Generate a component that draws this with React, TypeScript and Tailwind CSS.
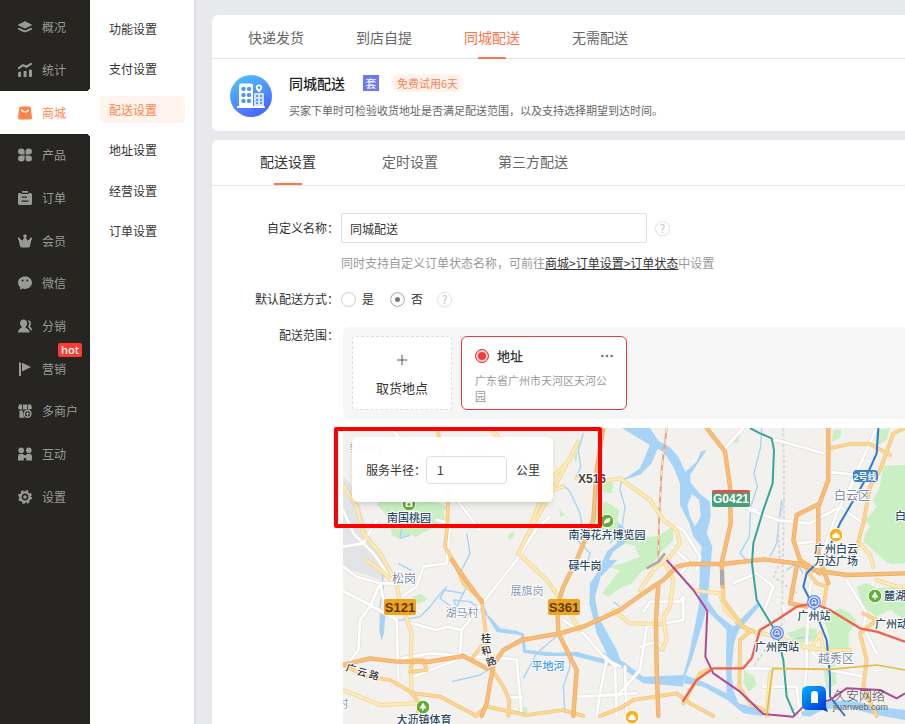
import { useState, type ReactNode } from 'react';
import { MoreHorizontal, Plus } from 'lucide-react';

const NAV_ITEMS = [
  { label: '概况', icon: 'layers' },
  { label: '统计', icon: 'stats' },
  { label: '商城', icon: 'shop' },
  { label: '产品', icon: 'product' },
  { label: '订单', icon: 'order' },
  { label: '会员', icon: 'crown' },
  { label: '微信', icon: 'wechat' },
  { label: '分销', icon: 'users' },
  { label: '营销', icon: 'flag', hot: true },
  { label: '多商户', icon: 'store' },
  { label: '互动', icon: 'people' },
  { label: '设置', icon: 'gear' },
];

const SUB_ITEMS = ['功能设置', '支付设置', '配送设置', '地址设置', '经营设置', '订单设置'];

const ICONS: Record<string, ReactNode> = {
  layers: (
    <>
      <path d="M7 1.2 13.6 4.4Q14.4 4.9 13.6 5.4L8.2 8Q7 8.6 5.8 8L.4 5.4Q-.4 4.9.4 4.4Z" />
      <path d="M1 8.8 5.8 11.1Q7 11.6 8.2 11.1L13 8.8" fill="none" stroke="currentColor" strokeWidth="2" strokeLinecap="round" />
    </>
  ),
  stats: (
    <>
      <path d="M0 9.6 3 8.4V14H1Q0 14 0 13ZM5.6 8H8.6V14H5.6ZM11 8Q11 6.6 12.5 6.6T14 8V13Q14 14 13 14H11Z" />
      <path d="M.8 5.2 5 2.2 8.4 3.8 13 .9" fill="none" stroke="currentColor" strokeWidth="2.2" strokeLinecap="round" strokeLinejoin="round" />
    </>
  ),
  shop: (
    <>
      <path d="M3 .6H11Q12.6.6 12.9 2.2L14 11.5Q14 13.6 12 13.6H2Q0 13.6 0 11.5L1.1 2.2Q1.4.6 3 .6Z" />
      <path d="M3.6 4.2Q7 7.6 10.4 4.2" fill="none" stroke="#fff" strokeWidth="1.4" strokeLinecap="round" />
    </>
  ),
  product: (
    <>
      <path d="M3.3.6Q6.6.6 6.6 3.6V6.6H3.3Q0 6.6 0 3.6T3.3.6Z" />
      <path d="M10.7.6Q14 .6 14 3.6T10.7 6.6H7.6V3.6Q7.6.6 10.7.6Z" />
      <path d="M3.3 7.6H6.6V10.6Q6.6 13.6 3.3 13.6T0 10.6 3.3 7.6Z" />
      <path d="M7.6 7.6H10.7Q14 7.6 14 10.6T10.7 13.6 7.6 10.6Z" />
    </>
  ),
  order: (
    <>
      <path d="M4 0H10V2H12.4Q14 2 14 3.6V12.4Q14 14 12.4 14H1.6Q0 14 0 12.4V3.6Q0 2 1.6 2H4Z" />
      <path d="M3.4 2.4H10.6M3.6 6.2H9M3.6 10.2H10.4" stroke="#262522" strokeWidth="1.3" />
    </>
  ),
  crown: (
    <path d="M7 .4A1.6 1.6 0 0 1 7.9 3.4L9.4 6.4 12 5A1.2 1.2 0 1 1 13.4 5.8L12 12Q11.8 13.4 10.4 13.4H3.6Q2.2 13.4 2 12L.6 5.8A1.2 1.2 0 1 1 2 5L4.6 6.4 6.1 3.4A1.6 1.6 0 0 1 7 .4Z" />
  ),
  wechat: (
    <>
      <path d="M7 .4C11 .4 14 3 14 6.6S11 12.9 7 12.9Q5.6 12.9 4.4 12.5L2 13.8 2.2 11.6Q0 9.8 0 6.6C0 3 3 .4 7 .4Z" />
      <circle cx="4.6" cy="4.6" r="1" fill="#262522" />
      <circle cx="9.4" cy="4.6" r="1" fill="#262522" />
    </>
  ),
  users: (
    <>
      <path d="M5.6.4C8 .4 9.2 2.2 9.2 4.2S7.8 7.4 7.6 8.2 11.6 10 11.6 13.4H0C0 9.6 3.8 9.2 3.8 8.2S2 6.2 2 4.2 3.2.4 5.6.4Z" />
      <path d="M10.2 1.8C11.8 2.4 12.2 3.2 12.2 4.4S11 7 11 7.6 13 8.6 13.4 11.4" fill="none" stroke="currentColor" strokeWidth="1.7" />
    </>
  ),
  flag: <path d="M1 .6H3V14H1ZM4 .8 13.2 5 4 9.4Z" />,
  store: (
    <>
      <path d="M1 .4H4.2V5.4H2Q.4 5.4 0 4ZM5 .4H9V5.4H5ZM9.8 .4H13L14 4Q13.6 5.4 12 5.4H9.8ZM1.4 6.4H4.8V9.8H5.6V12.2L6.8 13.8H1.4Z" />
      <circle cx="9.6" cy="9.8" r="3.4" fill="none" stroke="currentColor" strokeWidth="1.5" />
      <path d="M9.6 7.9V11.7M7.7 9.8H11.5" stroke="currentColor" strokeWidth="1.2" />
    </>
  ),
  people: (
    <>
      <circle cx="3.2" cy="3.2" r="2.8" />
      <circle cx="10.8" cy="3.2" r="2.8" />
      <path d="M2 6.8H4.4L6.4 8.2H7.6L9.6 6.8H12Q14 7.4 14 9.4V13.4H8.2V11H5.8V13.4H0V9.4Q0 7.4 2 6.8Z" />
    </>
  ),
  gear: (
    <>
      <circle cx="7" cy="7" r="4.6" fill="none" stroke="currentColor" strokeWidth="2.4" />
      <circle cx="7" cy="7" r="1.8" />
      <circle cx="7" cy="7" r="6.1" fill="none" stroke="currentColor" strokeWidth="1.8" strokeDasharray="2.6 2.19" />
    </>
  ),
};

function NavIcon({ name }: { name: string }) {
  return (
    <svg viewBox="0 0 14 14" className="size-3.5 shrink-0" fill="currentColor" aria-hidden="true">
      {ICONS[name]}
    </svg>
  );
}

function HelpIcon() {
  return (
    <span className="flex size-[15px] items-center justify-center rounded-full border border-[#e2e2e2] text-[11px] leading-none text-[#bdbdbd] shadow-xs">
      ?
    </span>
  );
}

function BuildingIcon() {
  return (
    <svg viewBox="0 0 42 42" className="size-[42px] shrink-0" aria-hidden="true">
      <defs>
        <linearGradient id="disc" x1="0.2" y1="0" x2="0.7" y2="1">
          <stop offset="0" stopColor="#4fc1ff" />
          <stop offset="1" stopColor="#4a66ff" />
        </linearGradient>
      </defs>
      <circle cx="21" cy="21" r="21" fill="url(#disc)" />
      <path d="M23 34 34 20 42 25A21 21 0 0 1 27 41Z" fill="#4a6bff" opacity="0.5" />
      <rect x="24" y="18" width="10" height="14" rx="1" fill="#d3e3ff" />
      <path d="M11 8.5H21Q23 8.5 23 10.5V32H9V10.5Q9 8.5 11 8.5Z" fill="#fff" />
      <path d="M7 31H34Q35 31 35 33H7Z" fill="#fff" />
      <path d="M29 9.5A3.2 3.2 0 0 1 32.2 12.7Q32.2 14.5 29 17.5 25.8 14.5 25.8 12.7A3.2 3.2 0 0 1 29 9.5Z" fill="#fff" />
      <circle cx="29" cy="12.6" r="1.3" fill="#4c95ff" />
      <g fill="#4c95ff">
        {[12, 18, 24].map((y) => (
          <g key={y}>
            <rect x="11.5" y={y} width="4" height="4" rx="1.4" />
            <rect x="17" y={y} width="4" height="4" rx="1.4" />
          </g>
        ))}
        {[20, 24, 27].map((y) => (
          <g key={y}>
            <rect x="26" y={y} width="2" height="2" rx="0.5" />
            <rect x="30" y={y} width="2" height="2" rx="0.5" />
          </g>
        ))}
      </g>
    </svg>
  );
}

const GREEN_AREAS = [
  'M155 200 150 240 140 255 165 280 182 320 185 345 205 355 240 342 258 352 275 340 310 322 330 305 345 300 340 275 352 262 330 250 300 240 285 200 230 190Z',
  'M792 262 820 245 845 255 868 272 862 300 880 330 930 350 925 380 870 365 835 360 815 330 790 320Z',
  'M1030 318 985 348 945 352 915 385 930 410 880 430 830 440 870 450 840 490 815 520 835 530 870 505 905 490 935 455 960 440 990 400 1030 360Z',
  'M1660 138 1725 134V430L1685 432 1668 425 1640 400 1600 365 1606 340 1622 320 1605 300 1640 262 1628 240 1648 205Z',
  'M1480 590 1530 565 1560 580 1580 605 1556 640 1556 680 1520 700 1515 740 1495 745 1480 700 1500 660Z',
  'M1580 500 1610 490 1640 505 1700 500 1725 520V600L1680 570 1640 590 1600 560Z',
  'M1370 640 1420 622 1460 626 1460 660 1400 672Z',
  'M1242 752 1272 768 1280 795 1256 815 1240 790Z',
  'M1640 30 1680 24 1670 60 1635 80Z',
  'M1510 30 1535 28 1530 55 1505 65Z',
  'M1212 50 1230 46 1222 68 1202 70Z',
  'M730 110 748 80 738 130Z',
  'M688 268 706 286 690 290Z',
  'M245 530 275 522 292 540 262 552Z',
  'M578 862 592 862 590 888 575 888Z',
  'M534 345 555 332 550 350 536 360Z',
  'M810 175 850 190 845 220 815 215Z',
  'M1480 745 1515 750 1520 790 1490 810Z',
];

const WATER = [
  'M875 24 960 24 985 62 1020 82 1045 110 1066 156 1100 125 1112 95 1130 90 1080 165 1082 188 1110 222 1140 245 1142 290 1130 340 1147 380 1142 430 1132 560 1112 630 1085 720 1060 780 1060 800 1010 795 940 790 870 740 815 710 815 695 880 725 940 770 1060 765 1078 700 1106 560 1110 430 1115 380 1090 350 1078 310 1050 255 1050 190 1030 140 1000 95 960 75Z',
  'M1112 520 1136 545 1165 585 1210 620 1280 550 1292 555 1225 632 1212 670 1204 760 1210 810 1225 850 1300 870 1300 888 1240 880 1195 842 1120 800 1060 790 1065 765 1120 785 1190 820 1188 720 1190 630 1140 580Z',
  'M1300 870 1400 885 1470 845 1560 840 1640 860 1725 870V900L1640 885 1550 862 1480 868 1440 890Z',
  'M828 420 862 420 812 470 795 530 805 590 860 690 875 730 840 720 800 640 778 550 780 490Z',
  'M462 575 480 590 510 625 560 632 582 642 588 690 680 698 740 695 800 712 870 725 870 745 800 725 730 708 650 708 580 698 572 645 500 636Z',
  'M150 580 166 585 162 640 154 662 148 630Z',
  'M865 310 890 330 885 370 850 395 820 450 790 480 815 430 830 395 860 370Z',
  'M960 75 985 80 965 130 935 160 880 180 930 145Z',
];

const STREAMS = [
  'M935 160 875 180 870 210 885 260 875 330 840 370',
  'M1295 24 1292 80 1272 160 1282 200 1262 260 1258 350 1230 400 1250 420',
  'M1355 240 1345 320 1340 370 1320 410',
  'M700 195 720 215 750 280 758 330 742 360 780 400 770 440',
  'M760 40 745 90 752 140 738 175 800 190',
  'M500 60 440 75 470 100 420 95 550 180',
  'M155 440 160 500 150 560 160 640',
  'M350 500 330 535 390 580 370 540 420 545 470 580 450 540',
  'M205 602 270 590 300 560 340 510 400 520',
  'M870 560 850 545M690 640 620 700 580 775M365 785 450 765 490 740',
  'M410 340 420 400 395 450 410 500 380 560',
  'M715 690 720 740 700 800 705 880',
  'M1280 555 1250 590 1215 610M1440 650 1400 655',
  'M1370 450 1400 430 1420 460',
  'M205 430 245 452M215 325 210 355 240 345',
];

const WHITE_ROADS = [
  'M39 270 70 340 130 400 165 450 190 490 150 490 80 470 39 440',
  'M39 513 120 555 200 600 205 780',
  'M150 490 120 560 90 600 85 690 39 750',
  'M150 490 165 560 200 600',
  'M180 24 250 95 320 200 380 240 450 330 440 330',
  'M240 608 320 630 350 620 395 630 450 560 560 420 620 325 660 290',
  'M395 630 390 700 380 720 250 770',
  'M215 715 300 700 560 718 575 888M540 832 575 832',
  'M700 600 760 640 830 720 870 740M830 720 810 820 800 888M740 830 870 825',
  'M39 380 100 370 140 300',
  'M320 300 360 310 350 430 280 440 260 500 200 540',
  'M1180 90 1240 24M1320 68 1340 60 1480 100',
  'M1260 270 1350 302 1440 310 1530 260 1600 310',
  'M1490 155 1580 165M1570 190 1530 260',
  'M1400 370 1450 365M1640 24 1560 200 1520 280 1440 500 1430 660',
  'M1550 480 1610 580 1600 620 1640 700',
  'M1240 260 1280 270M1210 490 1280 460 1330 500 1300 580',
  'M1040 320 1060 330 1110 410 1100 450M1025 380 1080 430 1050 460',
  'M940 575 960 545 1050 545 1060 530 1060 600 950 620 930 750 860 830',
  'M810 825 920 820M825 710 855 740 860 888M885 740 890 888',
  'M1240 745 1330 746M1300 800 1400 800 1410 888M1360 560 1370 600',
  'M1430 660 1430 740 1420 850 1380 888',
  'M990 700 1000 690 980 665 930 680',
  'M1340 660 1440 690 1500 750 1600 770',
];

const YELLOW_ROADS = [
  'M39 195 80 260 100 340 150 400 200 490 208 540 225 580 245 640 242 720 245 820',
  'M39 810 150 855 260 850',
  'M110 420 150 450 185 480',
  'M480 24 560 110 640 200 720 120M745 65 690 170 600 330 565 400 650 480 700 550 750 630',
  'M700 200 640 220 600 320M565 400 620 450',
  'M740 175 810 185 870 175 890 190 960 240 1000 300 1040 330 1050 370 1020 410 970 450 930 510',
  'M1000 420 1030 480 1020 560 1000 590 1010 660 995 690',
  'M850 570 900 610 990 612',
  'M1100 512 1170 520 1185 570 1250 630 1340 650 1420 680 1480 690 1560 690',
  'M1590 370 1620 405 1630 440M1480 690 1470 640 1440 690',
  'M1320 760 1315 835 1310 888',
  'M1640 480 1700 500 1725 500',
];

const AMBER_ROADS = [
  'M320 24 345 120 355 200 352 320 345 380 380 440 400 490 455 540 465 620 470 660 430 710',
  'M470 660 480 740 520 800 538 840 535 888',
  'M39 735 110 770 180 780 250 820 330 830 440 888',
  'M435 888 470 860 590 885 700 870 760 888',
  'M245 820 270 850 260 888M240 755 250 720 280 720 290 750 250 755',
  'M1500 85 1560 72 1620 72 1680 105',
  'M1725 24 1690 40 1650 150 1620 200 1600 310 1570 420',
  'M1180 500 1180 540 1240 620 1270 635',
  'M1265 630 1230 660 1228 800 1260 850 1300 870',
  'M810 888 870 865 910 840 1040 820 1080 850 1150 888',
  'M1060 850 1110 760 1140 745',
  'M1600 580 1640 600 1590 640 1610 720 1600 800 1640 888',
  'M1430 450 1460 490 1490 500 1480 560',
];

const ORANGE_ROADS = [
  'M39 735 120 715 200 725 300 725 400 708 470 745 500 720 520 690 575 660 690 640 760 620 870 570 940 520 1000 480 1040 440 1080 432 1180 432 1300 418 1400 430 1450 450 1550 465 1725 460',
  'M365 420 400 470 455 545',
  'M490 740 480 790 470 850 455 888',
  'M820 24 800 150 790 300 740 420 700 500 682 560 685 640 740 750 730 888',
  'M1130 24 1185 95 1200 200 1202 310 1175 430 1178 500',
  'M1495 24 1495 180 1465 260 1465 400 1480 450 1495 490',
  'M1470 250 1400 285 1390 360 1410 420 1470 460',
  'M985 490 978 600 980 740 985 888',
  'M1400 440 1380 550 1430 560',
];

const LINES = [
  { d: 'M1260 24 1290 40 1325 55 1332 90 1328 190 1300 270 1270 370 1266 430 1280 540 1340 640 1360 720 1370 830 1395 888', color: '#36a79c', width: 6 },
  { d: 'M1645 24 1640 100 1600 190 1530 310 1490 400 1430 460 1420 500 1450 560 1490 660 1500 770 1500 830 1545 888', color: '#3078d2', width: 6 },
  { d: 'M1010 420 1090 510 1132 572 1126 710 1150 760 1230 815 1300 882 1390 890 1420 860 1500 840 1550 805 1650 810 1700 835 1725 820', color: '#b04a92', width: 6 },
  { d: 'M1058 845 1100 780 1150 745 1240 745 1265 715 1290 630 1340 600 1400 560 1450 550 1500 570 1590 625 1640 635 1725 665', color: '#f0604a', width: 7 },
  { d: 'M1310 888 1328 745 1500 748 1640 735 1725 750', color: '#e7b948', width: 5 },
];

function Roads({ paths, color, casing, width }: { paths: string[]; color: string; casing: string; width: number }) {
  return (
    <g fill="none" strokeLinejoin="round" strokeLinecap="round">
      {paths.map((d) => <path key={d} d={d} stroke={casing} strokeWidth={width + 4} />)}
      {paths.map((d) => <path key={d} d={d} stroke={color} strokeWidth={width} />)}
    </g>
  );
}

function StationPin({ x, y }: { x: number; y: number }) {
  return (
    <g transform={`translate(${x} ${y})`}>
      <circle r="7" fill="#fff" />
      <circle r="6.3" fill="none" stroke="#5b86ee" strokeWidth="1.3" />
      <circle r="4.6" fill="#5b86ee" />
      <path d="M-2 2.4V-.6A2 2 0 0 1 2-.6V2.4M-2 .8H2" fill="none" stroke="#fff" strokeWidth="1" />
    </g>
  );
}

function ParkPin({ x, y, children }: { x: number; y: number; children: ReactNode }) {
  return (
    <g transform={`translate(${x} ${y})`}>
      <circle r="6.8" fill="#62ad36" stroke="#fff" />
      {children}
    </g>
  );
}

function MallPin({ x, y }: { x: number; y: number }) {
  return (
    <g transform={`translate(${x} ${y})`}>
      <circle r="6.8" fill="#f9b21b" stroke="#fff" />
      <path d="M-3.5 3V-.5H-2A2 2 0 0 1 2-.5H3.5V3Z" fill="#fff" />
    </g>
  );
}

const PLACES = [
  { x: 66, y: 94, text: '南国桃园' },
  { x: 264, y: 111, text: '南海花卉博览园' },
  { x: 242, y: 142, text: '碌牛岗' },
  { x: 493, y: 125, text: '广州白云' },
  { x: 493, y: 137, text: '万达广场' },
  { x: 471, y: 192, text: '广州站' },
  { x: 434, y: 223, text: '广州西站' },
  { x: 81, y: 296, text: '大沥镇体育' },
];

const VILLAGES = [
  { x: 184, y: 167, text: '展旗岗' },
  { x: 119, y: 189, text: '湖马村' },
  { x: 23, y: 24, text: '黎岗村' },
  { x: 0, y: 280, text: '村' },
];

const DISTRICTS = [
  { x: 61, y: 155, text: '松岗' },
  { x: 509, y: 72, text: '白云区' },
  { x: 493, y: 235, text: '越秀区' },
];

function CityMap() {
  return (
    <svg
      viewBox="0 0 562 296"
      preserveAspectRatio="xMinYMin slice"
      className="absolute inset-0 size-full"
      fontFamily="'Liberation Sans', 'Noto Sans CJK SC', sans-serif"
      role="img"
      aria-label="地图"
    >
      <rect width="562" height="296" fill="#f2f1ee" />
      {/* terrain and roads are drawn at three times the label scale */}
      <g transform="translate(-13 -8) scale(0.33333)">
        <path d="M39 170 60 190 90 260 110 330 160 420 190 460 150 480 39 440Z" fill="#e3e4e7" />
        {GREEN_AREAS.map((d) => <path key={d} d={d} fill="#c9efc2" />)}
        {WATER.map((d) => <path key={d} d={d} fill="#a6d3f6" />)}
        <path d="M1086 222 1108 240 1112 290 1095 320 1080 290 1072 255Z" fill="#f2f1ee" />
        {STREAMS.map((d) => <path key={d} d={d} fill="none" stroke="#a6d3f6" strokeWidth="4" strokeLinejoin="round" />)}
        <path
          d="M1360 24 1362 240 1345 320 1350 430 1330 470 1400 520M1362 240 1355 620 1270 740"
          fill="none"
          stroke="#d9d9dc"
          strokeWidth="6"
          strokeDasharray="10 6"
        />
        <path d="M1010 24 995 150 987 300 985 420" fill="none" stroke="#e8a27c" strokeWidth="6" />
        <path d="M1010 24 995 150 987 300 985 420" fill="none" stroke="#fbeee4" strokeWidth="3" strokeDasharray="16 16" />
        <Roads paths={WHITE_ROADS} color="#ffffff" casing="#dfdedb" width={8} />
        <Roads paths={YELLOW_ROADS} color="#fdeab5" casing="#efd28f" width={8} />
        <Roads paths={AMBER_ROADS} color="#fdd791" casing="#f2bf76" width={7} />
        <Roads paths={ORANGE_ROADS} color="#f8bd78" casing="#eeaa62" width={9} />
        <path d="M1176 450V495" stroke="#a9a9ae" strokeWidth="12" />
        <path d="M950 445 985 425 1005 400" fill="none" stroke="#a9a9ae" strokeWidth="8" />
        {LINES.map((line) => (
          <path key={line.color} d={line.d} fill="none" stroke={line.color} strokeWidth={line.width} strokeLinejoin="round" />
        ))}
      </g>

      {/* road shields */}
      <g fontWeight="bold" fontSize="13" textAnchor="middle">
        <rect x="41" y="171" width="32" height="16" rx="2" fill="#f0a31c" />
        <text x="57" y="184" fill="#5b3c06">S121</text>
        <rect x="205" y="171" width="32" height="16" rx="2" fill="#f0a31c" />
        <text x="221" y="184" fill="#5b3c06">S361</text>
        <rect x="369" y="62" width="38" height="17" rx="2" fill="#469f76" />
        <path d="M369 65V64Q369 62 371 62H405Q407 62 407 64V65Z" fill="#d9534f" />
        <text x="388" y="75" fontSize="12" fill="#fff">G0421</text>
        <text x="249" y="55" fontSize="12" fill="#444" stroke="#fff" strokeWidth="2" paintOrder="stroke">X516</text>
        <rect x="510" y="42" width="25" height="12" rx="4" fill="#3a83c6" />
        <text x="522" y="52" fontSize="9" fill="#fff">2号线</text>
      </g>

      <g stroke="#fff" strokeWidth="2" paintOrder="stroke" strokeLinejoin="round">
        <g fontSize="11" fontWeight="500" fill="#2f4b66">
          <g textAnchor="middle">
            {PLACES.map((p) => <text key={p.text} x={p.x} y={p.y}>{p.text}</text>)}
          </g>
          <text x="552" y="92">白云山</text>
          <text x="541" y="172">麓湖公园</text>
          <text x="532" y="200">广州动物园</text>
        </g>
        <g fontSize="11" fill="#8b98b0" textAnchor="middle">
          {VILLAGES.map((p) => <text key={p.text} x={p.x} y={p.y}>{p.text}</text>)}
        </g>
        <g fontSize="12" fill="#7d8ba6" textAnchor="middle">
          {DISTRICTS.map((p) => <text key={p.text} x={p.x} y={p.y}>{p.text}</text>)}
        </g>
        <text x="205" y="242" fontSize="11" fontWeight="500" fill="#3d9be6" textAnchor="middle">平地河</text>
        <g fontSize="10" fontWeight="500" fill="#333" textAnchor="middle">
          <text x="143" y="214">桂</text>
          <text x="143" y="226" transform="rotate(-15 143 222)">和</text>
          <text x="148" y="237" transform="rotate(-20 148 233)">路</text>
          <text x="8" y="244" transform="rotate(15 8 240)">广</text>
          <text x="19" y="248" transform="rotate(15 19 244)">云</text>
          <text x="31" y="251" transform="rotate(15 31 247)">路</text>
        </g>
      </g>

      <ParkPin x={66} y={76}>
        <path d="M-3.5-2H3.5V3H-3.5Z" fill="#fff" />
        <circle cy="0.5" r="1.5" fill="#62ad36" />
      </ParkPin>
      <ParkPin x={264} y={93}>
        <path d="M-3 3.5Q-3.5-3.5 3.5-3 3.5 2.5-1.5 2Z" fill="#fff" />
      </ParkPin>
      <ParkPin x={532} y={168}>
        <path d="M0-4.5 3.5 1.5H.6V3.8H-.6V1.5H-3.5Z" fill="#fff" />
      </ParkPin>
      <ParkPin x={80} y={279}>
        <path d="M0-4.5 3.5 1.5H.6V3.8H-.6V1.5H-3.5Z" fill="#fff" />
      </ParkPin>
      <MallPin x={493} y={107} />
      <MallPin x={289} y={289} />
      <StationPin x={471} y={174} />
      <StationPin x={434} y={205} />

      {/* watermark */}
      <defs>
        <linearGradient id="mark" x1="0" y1="0" x2="0.8" y2="1">
          <stop offset="0" stopColor="#00b4ff" />
          <stop offset="1" stopColor="#0036d8" />
        </linearGradient>
      </defs>
      <path d="M465 258H477Q483 258 483 264V279L485 284 480 282H465Q459 282 459 276V264Q459 258 465 258Z" fill="url(#mark)" />
      <path d="M468 275V266Q468 263 471 263H472Q475 263 475 266V275Z" fill="#fff" />
      <text x="490" y="272" fontSize="13" fontWeight="300" fill="#4f4f4f">久安网络</text>
      <text x="490" y="282" fontSize="9" fill="#666">jiuanweb.com</text>
    </svg>
  );
}

const fieldLabel = 'w-[127px] shrink-0 text-right text-xs text-[#333]';

export default function App() {
  const [isDefault, setIsDefault] = useState('no');

  return (
    <div className="flex min-h-screen overflow-hidden bg-[#e8e9ed] font-['Noto_Sans_CJK_SC',sans-serif] text-[#333]">
      {/* Main navigation */}
      <nav className="w-[90px] shrink-0 bg-[#262522] pt-1.5">
        <ul className="grid h-[512px] grid-rows-12">
          {NAV_ITEMS.map((item) => {
            const active = item.label === '商城';
            return (
              <li
                key={item.label}
                className={
                  active
                    ? 'relative bg-white text-[#ff8548] before:absolute before:-top-1 before:right-0 before:size-1 before:bg-[radial-gradient(circle_at_0_0,#262522_4px,white_4px)] after:absolute after:right-0 after:-bottom-1 after:size-1 after:bg-[radial-gradient(circle_at_0_100%,#262522_4px,white_4px)]'
                    : 'relative text-[#999]'
                }
              >
                <a href="#" className="flex h-full items-center gap-2.5 pl-[18px] text-xs">
                  <NavIcon name={item.icon} />
                  {item.label}
                </a>
                {item.hot && (
                  <span className="absolute -top-1 right-2 rounded-xs bg-[#ff3b30] px-[3px] font-['Open_Sans',sans-serif] text-[11px] leading-[14px] font-semibold text-white">
                    hot
                  </span>
                )}
              </li>
            );
          })}
        </ul>
      </nav>

      {/* Secondary navigation */}
      <nav className="w-[104px] shrink-0 bg-white px-2.5 pt-2 shadow-[1px_0_4px_rgba(0,0,0,0.08)]">
        <ul className="grid h-[243px] grid-rows-6 items-center">
          {SUB_ITEMS.map((label) => (
            <li key={label}>
              <a
                href="#"
                className={
                  label === '配送设置'
                    ? 'block w-[85px] rounded-sm bg-[#fff3ee] pl-[9px] text-xs leading-[27px] text-[#ff8548]'
                    : 'block w-[85px] pl-[9px] text-xs leading-[27px]'
                }
              >
                {label}
              </a>
            </li>
          ))}
        </ul>
      </nav>

      <main className="flex min-w-0 flex-1 flex-col gap-[9px] pt-[15px] pl-[18px]">
        <section className="h-[116px] rounded-l-md bg-white">
          <div className="flex h-11 gap-[52px] border-b border-[#e6e6e6] pl-9 text-sm text-[#666]">
            {['快递发货', '到店自提', '同城配送', '无需配送'].map((tab) => (
              <button
                key={tab}
                type="button"
                className={
                  tab === '同城配送'
                    ? 'relative text-[#ff7344] after:absolute after:-bottom-px after:left-1/2 after:h-0.5 after:w-7 after:-translate-x-1/2 after:bg-[#ff7344]'
                    : ''
                }
              >
                {tab}
              </button>
            ))}
          </div>
          <div className="flex items-center gap-[17px] py-[15px] pl-[18px]">
            <BuildingIcon />
            <div className="flex flex-col gap-2.5">
              <div className="flex items-center">
                <h1 className="text-sm leading-[18px] font-medium text-[#222]">同城配送</h1>
                <span className="ml-[18px] flex size-4 items-center justify-center bg-[#7077f5] text-[11px] leading-none text-white">套</span>
                <span className="ml-3 rounded-full bg-[#fff3ee] px-1.5 text-[11px] leading-[18px] text-[#ff7f50]">免费试用6天</span>
              </div>
              <p className="text-[11px] leading-4 text-[#666]">
                买家下单时可检验收货地址是否满足配送范围，以及支持选择期望到达时间。
              </p>
            </div>
          </div>
        </section>

        <section className="flex flex-1 flex-col rounded-tl-md bg-white">
          <div className="flex h-[46px] shrink-0 border-b border-[#e6e6e6] pl-12 text-sm text-[#666]">
            <button
              type="button"
              className="relative pb-1 text-[#333] after:absolute after:bottom-0 after:left-1/2 after:h-0.5 after:w-7 after:-translate-x-1/2 after:bg-[#ff7344]"
            >
              配送设置
            </button>
            <button type="button" className="ml-[66px] pb-1">定时设置</button>
            <button type="button" className="ml-[60px] pb-1">第三方配送</button>
          </div>

          <div className="flex flex-1 flex-col pt-[27px]">
            <div className="flex items-center">
              <label htmlFor="custom-name" className={fieldLabel}>自定义名称：</label>
              <input
                id="custom-name"
                defaultValue="同城配送"
                className="mr-2 ml-0.5 h-[30px] w-[306px] rounded-xs border border-[#dcdfe6] px-2 text-xs outline-none"
              />
              <HelpIcon />
            </div>
            <p className="mt-3 ml-[129px] text-xs leading-4 text-[#999]">
              同时支持自定义订单状态名称，可前往
              <a href="#" className="text-[#333] underline">商城&gt;订单设置&gt;订单状态</a>
              中设置
            </p>

            <div role="radiogroup" aria-labelledby="mode-label" className="mt-5 flex items-center text-xs leading-4">
              <span id="mode-label" className={fieldLabel}>默认配送方式：</span>
              {[
                { value: 'yes', label: '是' },
                { value: 'no', label: '否' },
              ].map((opt) => (
                <label key={opt.value} className="mr-3.5 ml-0.5 flex items-center gap-1.5">
                  <input
                    type="radio"
                    name="default-mode"
                    value={opt.value}
                    checked={isDefault === opt.value}
                    onChange={() => setIsDefault(opt.value)}
                    className="size-[15px] appearance-none rounded-full border border-[#ccc] bg-white checked:bg-[#777] checked:shadow-[inset_0_0_0_4px_white]"
                  />
                  {opt.label}
                </label>
              ))}
              <HelpIcon />
            </div>

            <div className="mt-5 flex flex-none">
              <span className={fieldLabel}>配送范围：</span>
              <div className="ml-1 flex flex-1 gap-[9px] rounded-l-md bg-[#f6f6f6] p-[9px]">
                <button
                  type="button"
                  className="flex h-[74px] w-[100px] shrink-0 flex-col items-center justify-end gap-2.5 rounded-sm border border-dashed border-[#ddd] bg-white pb-[11px] text-[13px] leading-5"
                >
                  <Plus size={16} strokeWidth={1.5} className="text-[#555]" />
                  取货地点
                </button>
                <div className="h-[74px] w-[166px] shrink-0 rounded-md border border-[#ef3b3b] bg-white px-[13px] pt-[9px]">
                  <div className="flex items-center justify-between">
                    <label className="flex items-center gap-2 text-[13px] leading-5 font-medium">
                      <input
                        type="radio"
                        name="address"
                        defaultChecked
                        className="size-3.5 appearance-none rounded-full border border-[#ef3b3b] bg-[#ef3b3b] shadow-[inset_0_0_0_2px_#ffd9d9]"
                      />
                      地址
                    </label>
                    <button type="button" aria-label="更多" className="-mr-0.5">
                      <MoreHorizontal size={16} className="text-[#777]" />
                    </button>
                  </div>
                  <p className="mt-1.5 text-[11px] leading-4 text-[#999]">广东省广州市天河区天河公园</p>
                </div>
              </div>
            </div>

            <div className="relative mt-[9px] ml-[131px] min-h-[296px] flex-1">
              <CityMap />
              <div className="absolute top-[9px] left-[9px] flex h-[65px] w-[201px] items-center rounded-md bg-white/95 pl-3.5 text-xs shadow-md">
                <label htmlFor="radius">服务半径：</label>
                <input
                  id="radius"
                  defaultValue="1"
                  className="mr-[9px] h-7 w-[81px] rounded-sm border border-[#ddd] bg-white px-2.5 outline-none"
                />
                公里
              </div>
              {/* highlighted area */}
              <div className="pointer-events-none absolute -top-px -left-[9px] h-[101px] w-[268px] rounded-xs border-4 border-[#f00]" />
            </div>
          </div>
        </section>
      </main>
    </div>
  );
}
